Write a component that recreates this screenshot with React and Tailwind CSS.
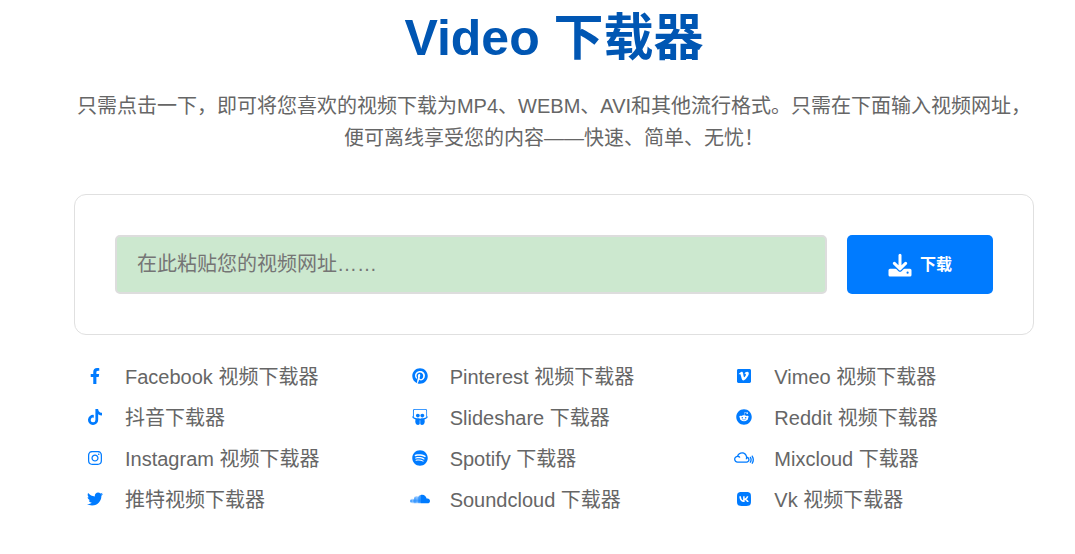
import { FaFacebookF, FaTiktok, FaInstagram, FaTwitter, FaPinterest, FaSlideshare, FaSpotify, FaSoundcloud, FaReddit, FaMixcloud } from 'react-icons/fa';
import { FaVimeo, FaVk } from 'react-icons/fa6';

const columns = [
  [
    { label: 'Facebook 视频下载器', Icon: FaFacebookF },
    { label: '抖音下载器', Icon: FaTiktok },
    { label: 'Instagram 视频下载器', Icon: FaInstagram },
    { label: '推特视频下载器', Icon: FaTwitter },
  ],
  [
    { label: 'Pinterest 视频下载器', Icon: FaPinterest },
    { label: 'Slideshare 下载器', Icon: FaSlideshare },
    { label: 'Spotify 下载器', Icon: FaSpotify },
    { label: 'Soundcloud 下载器', Icon: FaSoundcloud, wide: true },
  ],
  [
    { label: 'Vimeo 视频下载器', Icon: FaVimeo },
    { label: 'Reddit 视频下载器', Icon: FaReddit },
    { label: 'Mixcloud 下载器', Icon: FaMixcloud, wide: true },
    { label: 'Vk 视频下载器', Icon: FaVk },
  ],
];

function DownloadIcon() {
  return (
    <svg className="h-6 w-6" viewBox="0 0 24 24" aria-hidden="true">
      <path
        fillRule="evenodd"
        fill="currentColor"
        d="M2 15.8h20a1.5 1.5 0 0 1 1.5 1.5v4.6a1.5 1.5 0 0 1-1.5 1.5H2a1.5 1.5 0 0 1-1.5-1.5v-4.6A1.5 1.5 0 0 1 2 15.8zM19.6 18.6a1.1 1.1 0 1 0 0 2.2 1.1 1.1 0 0 0 0-2.2z"
      />
      {/* button-coloured edge keeps the arrow clear of the tray */}
      <path d="M6.4 10.8l5.6 5.4 5.6-5.4" fill="none" stroke="#007bff" strokeWidth="5" strokeLinecap="round" strokeLinejoin="round" />
      <path d="M12 2.2v13M6.4 10.4l5.6 5.4 5.6-5.4" fill="none" stroke="currentColor" strokeWidth="3" strokeLinecap="round" strokeLinejoin="round" />
    </svg>
  );
}

export default function App() {
  return (
    <main className="bg-white px-4 pt-2 font-['Liberation_Sans','Noto_Sans_CJK_SC',sans-serif] text-[#666666] md:pr-[41px] md:pl-[74px]">
      <h1 className="text-center text-[50px] leading-[60px] font-bold text-[#0056b3]">Video 下载器</h1>
      <p className="mt-[22px] text-center text-xl leading-8">
        只需点击一下，即可将您喜欢的视频下载为MP4、WEBM、AVI和其他流行格式。只需在下面输入视频网址，便可离线享受您的内容——快速、简单、无忧！
      </p>
      <form className="mt-10 flex gap-5 rounded-xl border border-[#e0e0e0] p-10" onSubmit={(e) => e.preventDefault()}>
        <input
          type="text"
          aria-label="视频网址"
          placeholder="在此粘贴您的视频网址……"
          className="h-[59px] min-w-0 flex-1 rounded-[5px] border-2 border-[#dddddd] bg-[#cce8cf] px-5 text-xl placeholder:text-[#757575]"
        />
        <button type="submit" className="flex w-[146px] items-center justify-center gap-2 rounded-[5px] bg-[#007bff] text-base font-bold text-white">
          <DownloadIcon />
          下载
        </button>
      </form>
      <div className="mt-[22px] grid grid-cols-3 gap-x-[14px]">
        {columns.map((items) => (
          <ul key={items[0].label}>
            {items.map(({ label, Icon, wide }) => (
              <li key={label} className="h-[41px]">
                <a href="#" className="flex h-10 items-center gap-[9px] text-xl">
                  <span className="flex w-[42px] justify-center pb-[2px] text-[#007bff]">
                    <Icon className={wide ? 'h-4 w-5' : 'h-4 w-4'} />
                  </span>
                  {label}
                </a>
              </li>
            ))}
          </ul>
        ))}
      </div>
    </main>
  );
}
